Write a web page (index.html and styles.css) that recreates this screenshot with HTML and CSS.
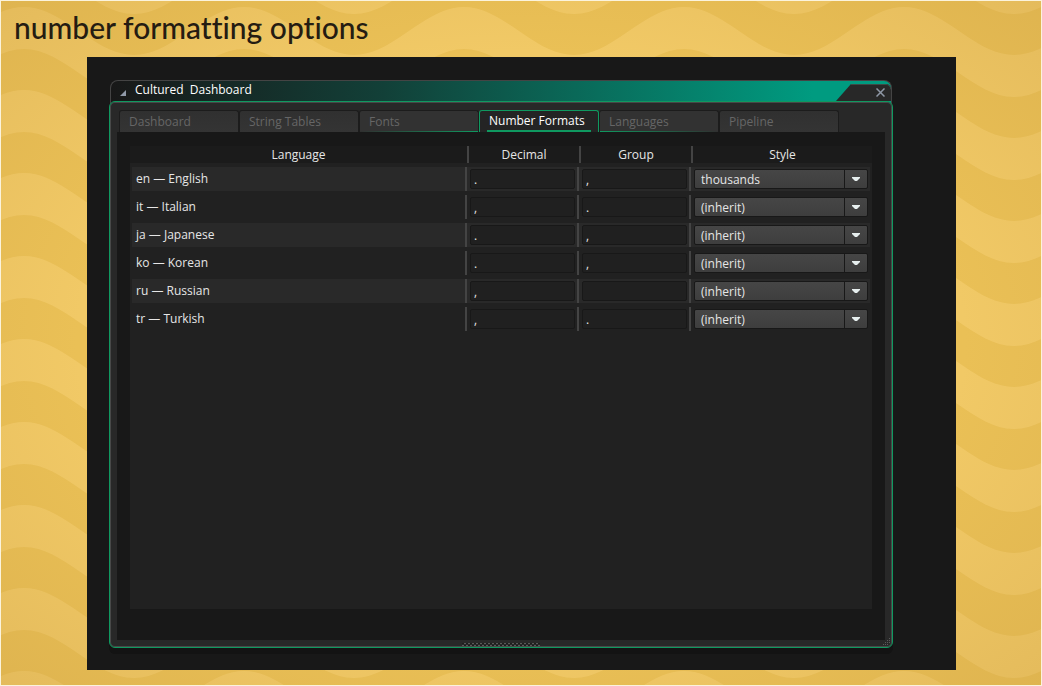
FILE: index.html
```html
<!DOCTYPE html>
<html lang="en">
<head>
    <meta charset="UTF-8">
    <meta name="viewport" content="width=device-width, initial-scale=1.0">
    <title>Number formatting options</title>
    <link rel="stylesheet" href="styles.css">
</head>
<body>
  <h1>number formatting options</h1>

  <main class="stage">
    <section class="window">
      <header class="titlebar">
        <button type="button" class="collapse" aria-label="Collapse"><svg width="6" height="6" viewBox="0 0 6 6"><path d="M6 0v6H0z" fill="#8f99a8"/></svg></button>
        <h2>Cultured  Dashboard</h2>
        <div class="corner">
          <svg width="55" height="17" viewBox="0 0 55 17"><path d="M0 17L15 0h35q4 0 5 5v12z" fill="#282828"/><path d="M15 0.500h35q4 0 5 5" fill="none" stroke="#3f4a46"/></svg>
          <button type="button" class="close" aria-label="Close"><svg width="9" height="9" viewBox="0 0 9 9"><path d="M0.500 0.500l8 8M8.500 0.500l-8 8" stroke="#8f98a6" stroke-width="1.500" fill="none"/></svg></button>
        </div>
      </header>

      <div class="frame">
        <nav class="tabs">
          <button type="button">Dashboard</button>
          <button type="button">String Tables</button>
          <button type="button" class="before">Fonts</button>
          <button type="button" class="active"><span>Number Formats</span></button>
          <button type="button" class="after">Languages</button>
          <button type="button">Pipeline</button>
        </nav>

        <div class="content">
          <div class="list">
            <table>
              <colgroup>
                <col>
                <col class="mark">
                <col class="mark">
                <col class="style">
              </colgroup>
              <thead>
                <tr><th>Language</th><th>Decimal</th><th>Group</th><th>Style</th></tr>
              </thead>
              <tbody>
                <tr>
                  <td>en — English</td>
                  <td><input type="text" value="." aria-label="English decimal"></td>
                  <td><input type="text" value="," aria-label="English group"></td>
                  <td><select aria-label="English style"><option>thousands</option><option>(inherit)</option></select></td>
                </tr>
                <tr>
                  <td>it — Italian</td>
                  <td><input type="text" value="," aria-label="Italian decimal"></td>
                  <td><input type="text" value="." aria-label="Italian group"></td>
                  <td><select aria-label="Italian style"><option>(inherit)</option><option>thousands</option></select></td>
                </tr>
                <tr>
                  <td>ja — Japanese</td>
                  <td><input type="text" value="." aria-label="Japanese decimal"></td>
                  <td><input type="text" value="," aria-label="Japanese group"></td>
                  <td><select aria-label="Japanese style"><option>(inherit)</option><option>thousands</option></select></td>
                </tr>
                <tr>
                  <td>ko — Korean</td>
                  <td><input type="text" value="." aria-label="Korean decimal"></td>
                  <td><input type="text" value="," aria-label="Korean group"></td>
                  <td><select aria-label="Korean style"><option>(inherit)</option><option>thousands</option></select></td>
                </tr>
                <tr>
                  <td>ru — Russian</td>
                  <td><input type="text" value="," aria-label="Russian decimal"></td>
                  <td><input type="text" value=" " aria-label="Russian group"></td>
                  <td><select aria-label="Russian style"><option>(inherit)</option><option>thousands</option></select></td>
                </tr>
                <tr>
                  <td>tr — Turkish</td>
                  <td><input type="text" value="," aria-label="Turkish decimal"></td>
                  <td><input type="text" value="." aria-label="Turkish group"></td>
                  <td><select aria-label="Turkish style"><option>(inherit)</option><option>thousands</option></select></td>
                </tr>
              </tbody>
            </table>
          </div>
        </div>

        <div class="grip"></div>
        <svg class="resize" width="8" height="8" viewBox="0 0 8 8" fill="#5a5a5a"><path d="M6 0h1v1h-1zM4 2h1v1h-1zM6 2h1v1h-1zM2 4h1v1h-1zM4 4h1v1h-1zM6 4h1v1h-1zM0 6h1v1h-1zM2 6h1v1h-1zM4 6h1v1h-1z"/></svg>
      </div>
    </section>
  </main>
</body>
</html>
```

FILE: styles.css
```css
* {
    box-sizing: border-box;
}
body {
    margin: 0;
    min-height: 100vh;
    display: flex;
    flex-direction: column;
    border: 1px solid #fbf3dc;
    background-color: #f1c966;
    background-image:
        radial-gradient(ellipse at center, rgba(190, 145, 60, 0) 60%, rgba(190, 145, 60, 0.25) 100%),
        url("data:image/svg+xml,%3Csvg xmlns='http://www.w3.org/2000/svg' width='220' height='83'%3E%3Cg fill='%23eac056'%3E%3Cpath d='M0 0C40 0 70 48 110 48S180 0 220 0V41C180 41 150 89 110 89S40 41 0 41z'/%3E%3Cpath d='M0 -83C40 -83 70 -35 110 -35S180 -83 220 -83V-42C180 -42 150 6 110 6S40 -42 0 -42z'/%3E%3C/g%3E%3C/svg%3E");
    background-position: 0 0, 24px 49px;
    font-family: "Open Sans", "Noto Sans", sans-serif;
    font-size: 12px;
    color: #e6e6e6;
}
button,
input,
select {
    font: inherit;
    color: inherit;
    margin: 0;
}
h1 {
    margin: 0;
    padding: 4px 13px 0;
    height: 56px;
    font-family: "Lato", sans-serif;
    font-size: 30px;
    font-weight: 500;
    font-variant-ligatures: none;
    line-height: 44px;
    color: #251c12;
}
.stage {
    flex: 1;
    display: flex;
    margin: 0 85px 15px 86px;
    padding: 23px 63px 22px 22px;
    background: #181818;
}
.window {
    flex: 1;
    display: flex;
    flex-direction: column;
}
.titlebar {
    display: flex;
    align-items: center;
    height: 27px;
    margin: 0 1px -6px;
    padding: 0 0 6px 9px;
    border: 1px solid #444;
    border-bottom: 0;
    border-radius: 8px 8px 0 0;
    background: linear-gradient(to right, #181818, #124038 35%, #009b80 90%);
}
.titlebar h2 {
    flex: 1;
    margin: 0 0 0 9px;
    padding-bottom: 2px;
    font-size: 12px;
    font-weight: 400;
    line-height: 16px;
    white-space: pre;
    color: #fff;
}
.titlebar button {
    display: flex;
    padding: 0;
    border: 0;
    background: none;
}
.titlebar .collapse {
    margin-top: 4px;
}
.corner {
    display: grid;
    align-self: flex-end;
    align-items: center;
}
.corner > * {
    grid-area: 1 / 1;
}
.corner .close {
    justify-self: end;
    margin-right: 6px;
}
.frame {
    position: relative;
    flex: 1;
    display: flex;
    flex-direction: column;
    padding: 8px 7px 7px;
    border: 1px solid #0f9960;
    border-radius: 6px;
    background: #282828;
    box-shadow: inset 0 0 0 1px #484848, 0 6px 0 #131313;
}
.tabs {
    display: flex;
    padding-left: 2px;
    height: 22px;
}
.tabs button {
    width: 120px;
    padding: 0 9px;
    border: 1px solid #1c1c1c;
    border-bottom: 0;
    border-radius: 3px 3px 0 0;
    background: linear-gradient(#303030, #343434);
    text-align: left;
    color: #666;
}
.tabs .active {
    padding: 0 7px;
    border-color: #0f9960;
    background: #242424;
    color: #fff;
}
.active span {
    display: block;
    height: 21px;
    padding: 0 2px;
    border-bottom: 2px solid #0f9960;
    line-height: 20px;
    white-space: nowrap;
}
.tabs .before {
    background: linear-gradient(to right, #303030, #0f9960) bottom / 100% 1px no-repeat, #323232;
}
.tabs .after {
    background: linear-gradient(to left, #303030, #0f9960) bottom / 100% 1px no-repeat, #323232;
}
.content {
    flex: 1;
    display: flex;
    padding: 14px 13px 31px;
    background: #181818;
}
.list {
    flex: 1;
    background: #212121;
}
table {
    width: 100%;
    margin-top: -4px;
    table-layout: fixed;
    border-collapse: separate;
    border-spacing: 0 4px;
}
.mark {
    width: 112px;
}
.style {
    width: 181px;
}
th {
    height: 17px;
    padding: 0;
    background: #1b1b1b;
    font-weight: 400;
    line-height: 16px;
}
th + th {
    border-left: 2px solid #444;
}
td {
    height: 24px;
    padding: 0 2px 0 3px;
    border-right: 2px solid #444;
    line-height: 20px;
}
tbody tr:nth-child(odd) td {
    background: #292929;
}
td:first-child {
    padding-left: 4px;
    border-left: 2px solid #212121;
}
td:last-child {
    border-right-color: #212121;
}
input,
select {
    display: block;
    width: 100%;
    height: 20px;
    border: 1px solid #181818;
    border-radius: 2px;
}
input {
    padding: 1px 3px 0;
    background: #202020;
}
select {
    appearance: none;
    padding: 0 28px 0 6px;
    background:
        url("data:image/svg+xml,%3Csvg xmlns='http://www.w3.org/2000/svg' width='23' height='18'%3E%3Cpath d='M0 0h1v18H0z' fill='%23181818'/%3E%3Cpath d='M8 7h8v1l-3 3h-2l-3-3z' fill='%23e6eeee'/%3E%3C/svg%3E") right center no-repeat,
        linear-gradient(#464646, #3e3e3e);
}
.grip {
    position: absolute;
    bottom: 1px;
    left: calc(50% - 39px);
    width: 78px;
    height: 3px;
    background:
        repeating-linear-gradient(to right, #1c1c1c 0 2px, #5a5a5a 2px 4px) top / 100% 1px no-repeat,
        repeating-linear-gradient(to right, #5a5a5a 0 2px, #1c1c1c 2px 4px) bottom / 100% 1px no-repeat;
}
.resize {
    position: absolute;
    right: 1px;
    bottom: 1px;
}
```
